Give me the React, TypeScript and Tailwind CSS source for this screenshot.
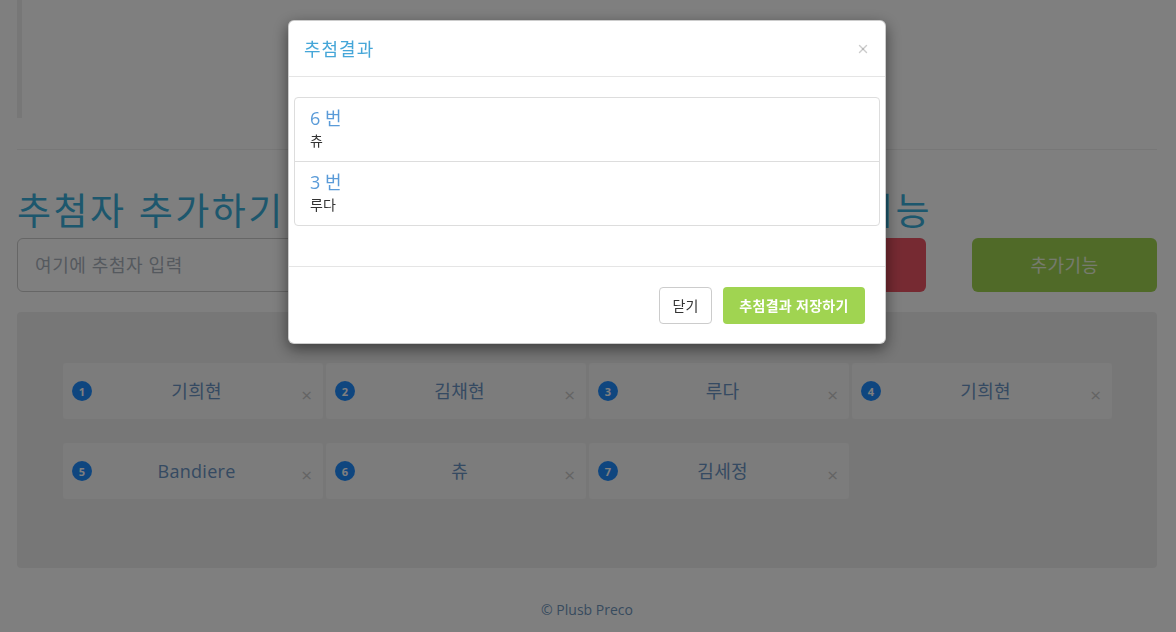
import { X } from 'lucide-react';

const entrants = ['기희현', '김채현', '루다', '기희현', 'Bandiere', '츄', '김세정'];

const winners = [
  { no: 6, name: '츄' },
  { no: 3, name: '루다' },
];

function EntrantCard({ index, name }: { index: number; name: string }) {
  return (
    <div className="flex h-[56px] w-[260px] items-center rounded-[3px] bg-[#f8f8f8] pl-[9px] pr-[11px]">
      <span className="flex h-[20px] w-[20px] items-center justify-center rounded-full bg-[#1f8cff] text-[11px] font-bold leading-none text-white">
        {index}
      </span>
      <span className="flex-1 text-center text-[18px] leading-[26px] tracking-[0.3px] text-[#6a94c4]">{name}</span>
      <span className="mt-[8px] text-[19px] leading-none text-[#c8c8c8]">×</span>
    </div>
  );
}

function ResultModal() {
  return (
    <div className="fixed inset-0 bg-black/50">
      <div className="ml-[288px] mt-[20px] w-[598px] rounded-[6px] border border-black/20 bg-white shadow-[0_5px_15px_rgba(0,0,0,0.5)]">
        <div className="flex items-center justify-between border-b border-[#e5e5e5] px-[15px] pb-[14px] pt-[15px]">
          <h4 className="text-[18px] leading-[26px] tracking-[1px] text-[#45a6d8]">추첨결과</h4>
          <button type="button" className="text-black/20" aria-label="Close">
            <X size={14} strokeWidth={2.5} />
          </button>
        </div>
        <div className="px-[5px] pb-[20px] pt-[20px]">
          <ul className="mb-[20px] rounded-[4px] border border-[#ddd]">
            {winners.map((w, i) => (
              <li key={w.no} className={`px-[15px] py-[10px] ${i > 0 ? 'border-t border-[#ddd]' : ''}`}>
                <h4 className="mb-[3px] text-[18px] leading-[20px] text-[#5a9bd8]">{w.no} 번</h4>
                <p className="text-[14px] leading-[20px] text-[#333]">{w.name}</p>
              </li>
            ))}
          </ul>
        </div>
        <div className="flex justify-end gap-[11px] border-t border-[#e5e5e5] px-[20px] pb-[19px] pt-[20px]">
          <button
            type="button"
            className="h-[37px] w-[53px] rounded-[4px] border border-[#ccc] bg-white text-[14px] text-[#333]"
          >
            닫기
          </button>
          <button
            type="button"
            className="h-[37px] w-[142px] rounded-[4px] bg-[#a0d451] text-[14px] font-bold tracking-[0.3px] text-white"
          >
            추첨결과 저장하기
          </button>
        </div>
      </div>
    </div>
  );
}

export default function App() {
  return (
    <div
      className="min-h-[632px] bg-white pl-[17px] pr-[19px]"
      style={{ fontFamily: '"Open Sans", "Noto Sans CJK KR", sans-serif' }}
    >
      <blockquote className="h-[88px] border-l-[5px] border-[#eee] pt-[30px]" style={{ boxSizing: 'content-box' }} />
      <hr className="mt-[31px] border-t border-[#eee]" />

      <div className="mt-[41px] grid grid-cols-[1fr_185px] gap-x-[46px]">
        <div>
          <div className="flex items-center justify-between">
            <h1 className="text-[37px] leading-[40px] tracking-[2.5px] text-[#3bafda]">추첨자 추가하기</h1>
            <h1 className="-mr-[6px] text-[37px] leading-[40px] tracking-[2.5px] text-[#3bafda]">추첨 기능</h1>
          </div>
          <div className="mt-[7px] flex gap-[12px]">
            <input
              className="h-[54px] flex-1 rounded-[6px] border border-[#ccc] px-[17px] text-[18px] tracking-[0.6px] outline-none placeholder:text-[#aab2bd]"
              placeholder="여기에 추첨자 입력"
            />
            <button type="button" className="h-[54px] w-[170px] rounded-[6px] bg-[#ed5565] text-[18px] text-white">
              추첨하기
            </button>
          </div>
        </div>
        <div className="flex flex-col justify-end">
          <button type="button" className="h-[54px] w-full rounded-[6px] bg-[#a0d451] text-[18px] tracking-[0.5px] text-white/80">
            추가기능
          </button>
        </div>
      </div>

      <div className="mt-[20px] rounded-[4px] bg-[#efefef] pb-[69px] pl-[46px] pt-[51px]">
        <div className="flex flex-wrap gap-x-[3px] gap-y-[24px]">
          {entrants.map((name, i) => (
            <EntrantCard key={i} index={i + 1} name={name} />
          ))}
        </div>
      </div>

      <footer className="mt-[32px] text-center text-[14px] leading-[20px] text-[#6f96bd]">© Plusb Preco</footer>

      <ResultModal />
    </div>
  );
}
